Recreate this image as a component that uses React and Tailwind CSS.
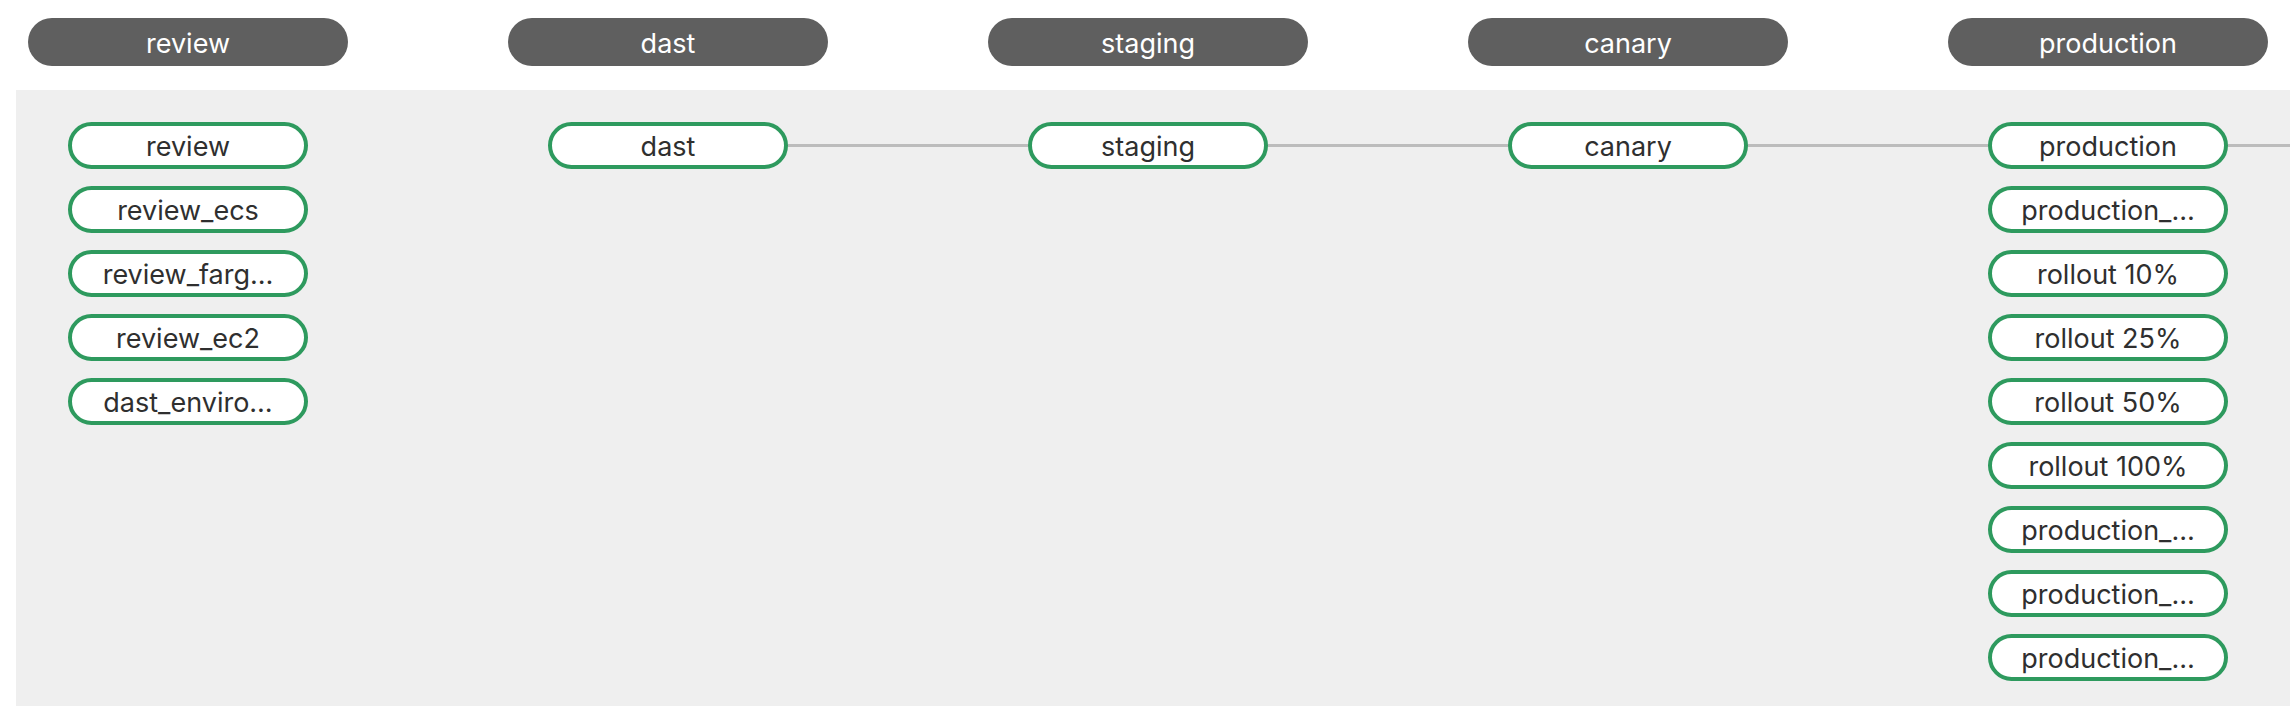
const stages = [
  {
    name: "review",
    connected: { left: false, right: false },
    environments: ["review", "review_ecs", "review_farg…", "review_ec2", "dast_enviro…"],
  },
  { name: "dast", connected: { left: false, right: true }, environments: ["dast"] },
  { name: "staging", connected: { left: true, right: true }, environments: ["staging"] },
  { name: "canary", connected: { left: true, right: true }, environments: ["canary"] },
  {
    name: "production",
    connected: { left: true, right: true },
    environments: [
      "production",
      "production_…",
      "rollout 10%",
      "rollout 25%",
      "rollout 50%",
      "rollout 100%",
      "production_…",
      "production_…",
      "production_…",
    ],
  },
];

function EnvNode({ label }) {
  return (
    <div className="box-border flex h-[47px] w-[240px] shrink-0 items-center justify-center rounded-full border-4 border-[#2e9a5e] bg-white px-7 pt-[2px] text-[27px] leading-none text-[#2f2f2f]">
      <span className="whitespace-nowrap">{label}</span>
    </div>
  );
}

function Connector({ show, width }) {
  return <div className={`${width} h-[3px] shrink-0 ${show ? "bg-[#bcbcbc]" : ""}`} />;
}

function StageColumn({ stage }) {
  const [first, ...rest] = stage.environments;
  return (
    <div className="flex w-[480px] shrink-0 flex-col gap-[17px]">
      <div className="flex items-center">
        <Connector show={stage.connected.left} width="w-[40px]" />
        <EnvNode label={first} />
        <Connector show={stage.connected.right} width="w-[200px]" />
      </div>
      {rest.map((env, i) => (
        <div key={i} className="pl-[40px]">
          <EnvNode label={env} />
        </div>
      ))}
    </div>
  );
}

export default function App() {
  return (
    <div
      className="flex h-screen w-full flex-col overflow-hidden bg-white"
      style={{ fontFamily: "Inter, 'Noto Sans', sans-serif" }}
    >
      <div className="flex shrink-0 pl-[28px] pt-[18px]">
        {stages.map((stage) => (
          <div key={stage.name} className="w-[480px] shrink-0">
            <div className="flex h-12 w-[320px] items-center justify-center rounded-full bg-[#5f5f5f] pt-[2px] text-[27px] leading-none text-white">
              {stage.name}
            </div>
          </div>
        ))}
      </div>

      <div className="ml-[16px] mt-[24px] flex flex-1 bg-[#efefef] pl-[12px] pt-[32px]">
        {stages.map((stage) => (
          <StageColumn key={stage.name} stage={stage} />
        ))}
      </div>
    </div>
  );
}
